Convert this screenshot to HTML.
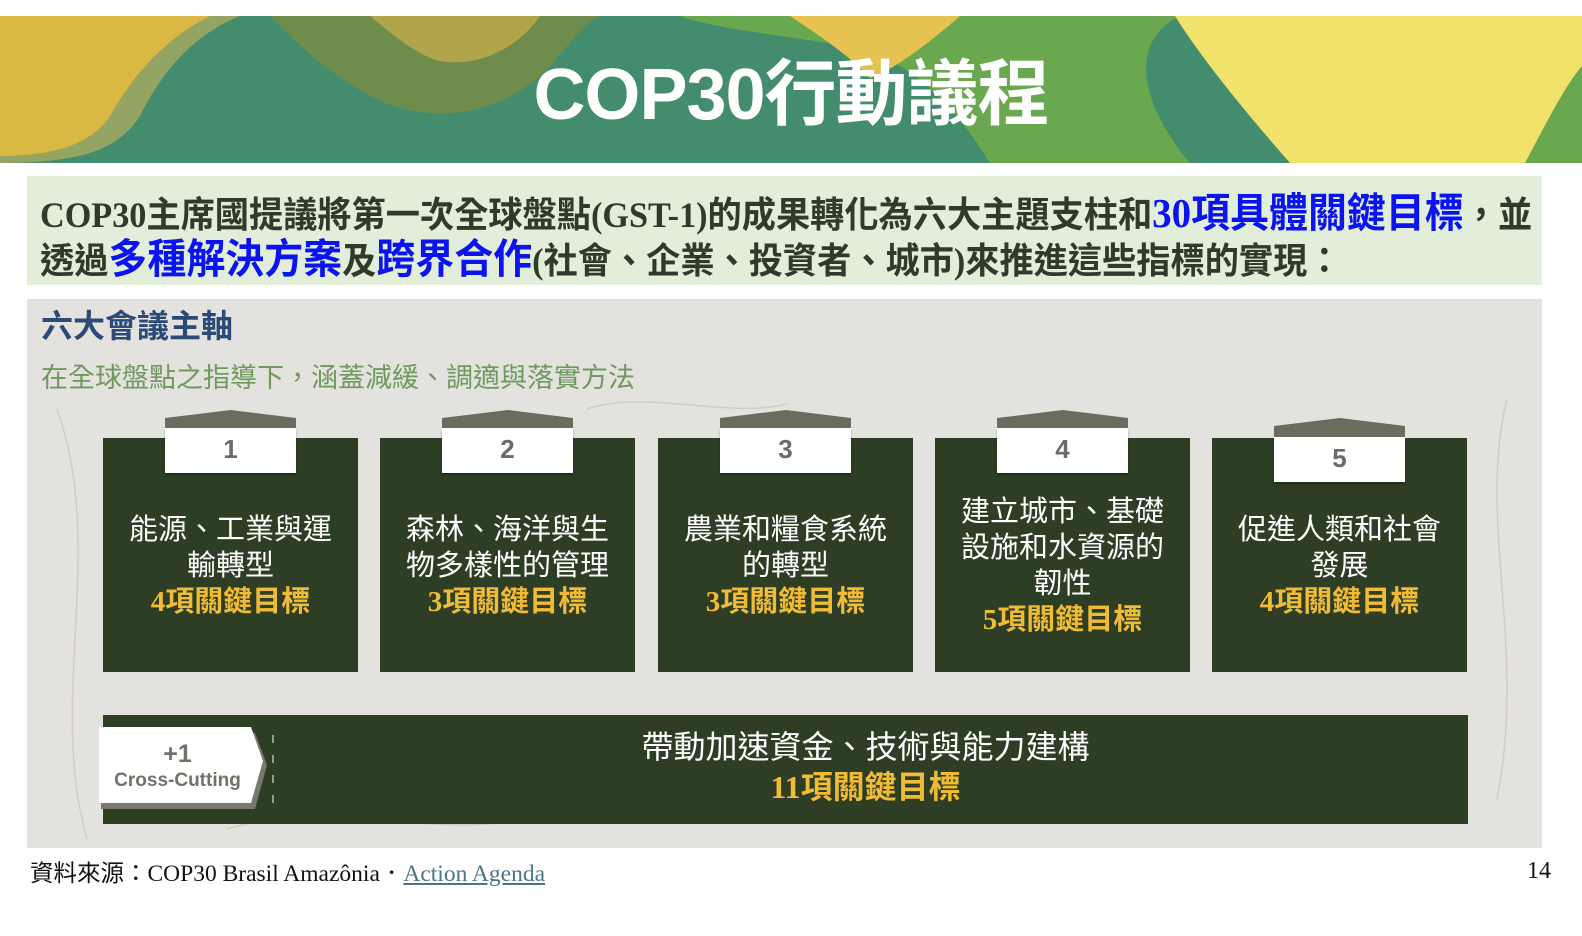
<!DOCTYPE html>
<html><head><meta charset="utf-8"><style>
*{margin:0;padding:0;box-sizing:border-box}
body{width:1582px;height:936px;background:#fff;position:relative;overflow:hidden;font-family:"Liberation Sans","Noto Sans CJK TC",sans-serif}
.abs{position:absolute}
.banner{left:0;top:16px;width:1582px;height:147px;overflow:hidden;background:#438c6e}
.title{left:0;width:1582px;top:54px;text-align:center;color:#fff;font-size:72px;line-height:82px;font-weight:bold;letter-spacing:-1px}
.intro{left:27px;top:176px;width:1515px;height:109px;background:#e3eeda}
.line{position:absolute;left:13px;white-space:nowrap;font-family:"Liberation Serif","Noto Sans CJK TC",serif;font-weight:bold;color:#2e3b2a;font-size:36px;transform:scaleX(0.95);transform-origin:left center}
.blue{color:#0a14f0;font-size:41px}
.panel{left:27px;top:299px;width:1515px;height:549px;background:#e3e2de}
.card{position:absolute;top:438px;width:255px;height:234px;background:#2d3e25;color:#fff;text-align:center;font-size:29px;line-height:36px;font-family:"Liberation Sans","Noto Sans CJK TC",sans-serif;display:flex;flex-direction:column;justify-content:center;padding-top:22px}
.card .y{color:#f0bb35;font-weight:bold;font-family:"Liberation Serif","Noto Sans CJK TC",serif}
.tab{position:absolute;width:131px;height:45px;background:#fff;top:-10px;left:62px;color:#6b6b66;font-size:26px;font-weight:bold;line-height:42px;box-shadow:0 2px 2px rgba(0,0,0,.3)}
.roof{position:absolute;left:62px;top:-28px;width:131px;height:20px}
</style></head><body>
<div class="abs banner">
<svg width="1582" height="147" viewBox="0 0 1582 147">
<rect width="1582" height="147" fill="#438c6e"/>
<path d="M0 0H240C190 20 160 60 140 100C120 130 90 147 0 147Z" fill="#94a462"/>
<path d="M0 0H210C160 25 130 65 110 100C90 130 50 140 0 140Z" fill="#dab844"/>
<path d="M270 0C300 30 330 60 380 85C440 110 500 95 540 60C570 30 580 10 600 0Z" fill="#6e8c4c"/>
<path d="M370 0C400 25 420 40 440 45C480 52 520 30 540 0Z" fill="#b0a54a"/>
<path d="M680 0H1180C1120 30 1150 100 1190 147H990C960 100 930 60 870 35C800 20 720 15 680 0Z" fill="#6aa84f"/>
<path d="M790 0H960C920 35 890 55 870 62C850 40 820 20 790 0Z" fill="#e6c253"/>
<path d="M1175 0H1582V147H1290C1240 90 1200 40 1175 0Z" fill="#f1e26c"/>
<path d="M1525 147C1550 100 1565 70 1582 50V147Z" fill="#6aa84f"/>
</svg>
</div>
<div class="abs title">COP30行動議程</div>
<div class="abs intro">
<div class="line" style="top:3px">COP30主席國提議將第一次全球盤點(GST-1)的成果轉化為六大主題支柱和<span class="blue">30項具體關鍵目標</span>，並</div>
<div class="line" style="top:49px">透過<span class="blue">多種解決方案</span>及<span class="blue">跨界合作</span>(社會、企業、投資者、城市)來推進這些指標的實現：</div>
</div>
<div class="abs panel">
<svg class="abs" style="left:0;top:100px" width="1515" height="449"><g fill="none" stroke="#cfcdc6" stroke-width="1.5"><path d="M30 10C80 150 20 300 60 440"/><path d="M1480 0C1450 120 1500 250 1470 400"/><path d="M560 10C620 -10 700 20 760 5"/><path d="M200 430C300 400 400 440 500 420"/></g></svg>
<div class="abs" style="left:14px;top:2px;color:#2c4a78;font-size:32px;font-weight:bold;font-family:'Liberation Sans','Noto Sans CJK TC',sans-serif">六大會議主軸</div>
<div class="abs" style="left:14px;top:57px;color:#6f9a5e;font-size:27px">在全球盤點之指導下，涵蓋減緩、調適與落實方法</div>
</div>

<div class="card" style="left:103px"><svg class="roof" viewBox="0 0 131 20"><path d="M0 8L66 0L131 8V20H0Z" fill="#6b6b5e"/></svg><div class="tab">1</div>能源、工業與運<br>輸轉型<br><span class="y">4項關鍵目標</span></div>
<div class="card" style="left:380px"><svg class="roof" viewBox="0 0 131 20"><path d="M0 8L66 0L131 8V20H0Z" fill="#6b6b5e"/></svg><div class="tab">2</div>森林、海洋與生<br>物多樣性的管理<br><span class="y">3項關鍵目標</span></div>
<div class="card" style="left:658px"><svg class="roof" viewBox="0 0 131 20"><path d="M0 8L66 0L131 8V20H0Z" fill="#6b6b5e"/></svg><div class="tab">3</div>農業和糧食系統<br>的轉型<br><span class="y">3項關鍵目標</span></div>
<div class="card" style="left:935px"><svg class="roof" viewBox="0 0 131 20"><path d="M0 8L66 0L131 8V20H0Z" fill="#6b6b5e"/></svg><div class="tab">4</div>建立城市、基礎<br>設施和水資源的<br>韌性<br><span class="y">5項關鍵目標</span></div>
<div class="card" style="left:1212px"><svg class="roof" style="top:-20px" viewBox="0 0 131 20"><path d="M0 8L66 0L131 8V20H0Z" fill="#6b6b5e"/></svg><div class="tab" style="top:-1px">5</div>促進人類和社會<br>發展<br><span class="y">4項關鍵目標</span></div>

<div class="abs" style="left:103px;top:715px;width:1365px;height:109px;background:#2d3e25;color:#fff;text-align:center;font-size:32px;line-height:40px;padding-top:12px;padding-left:160px">帶動加速資金、技術與能力建構<br><span style="color:#f0bb35;font-weight:bold;font-family:'Liberation Serif','Noto Sans CJK TC',serif">11項關鍵目標</span></div>
<svg class="abs" style="left:97px;top:725px" width="180" height="88"><path d="M4 8H158L170 40L158 84H4Z" fill="#7a776d"/><path d="M2 2H154L166 36L154 78H2Z" fill="#fff"/><line x1="176" y1="10" x2="176" y2="80" stroke="#fff" stroke-dasharray="8 12"/></svg>
<div class="abs" style="left:99px;top:741px;width:157px;text-align:center;color:#727268;font-weight:bold;font-size:25px;line-height:26px">+1</div>
<div class="abs" style="left:99px;top:769px;width:157px;text-align:center;color:#727268;font-weight:bold;font-size:19px;line-height:24px">Cross-Cutting</div>

<div class="abs" style="left:30px;top:854px;font-family:'Liberation Serif','Noto Sans CJK TC',serif;font-size:23.5px;color:#111">資料來源：COP30 Brasil Amazônia．<span style="color:#4a7587;text-decoration:underline">Action Agenda</span></div>
<div class="abs" style="left:1527px;top:858px;font-family:'Liberation Serif',serif;font-size:24px;color:#111">14</div>
</body></html>
